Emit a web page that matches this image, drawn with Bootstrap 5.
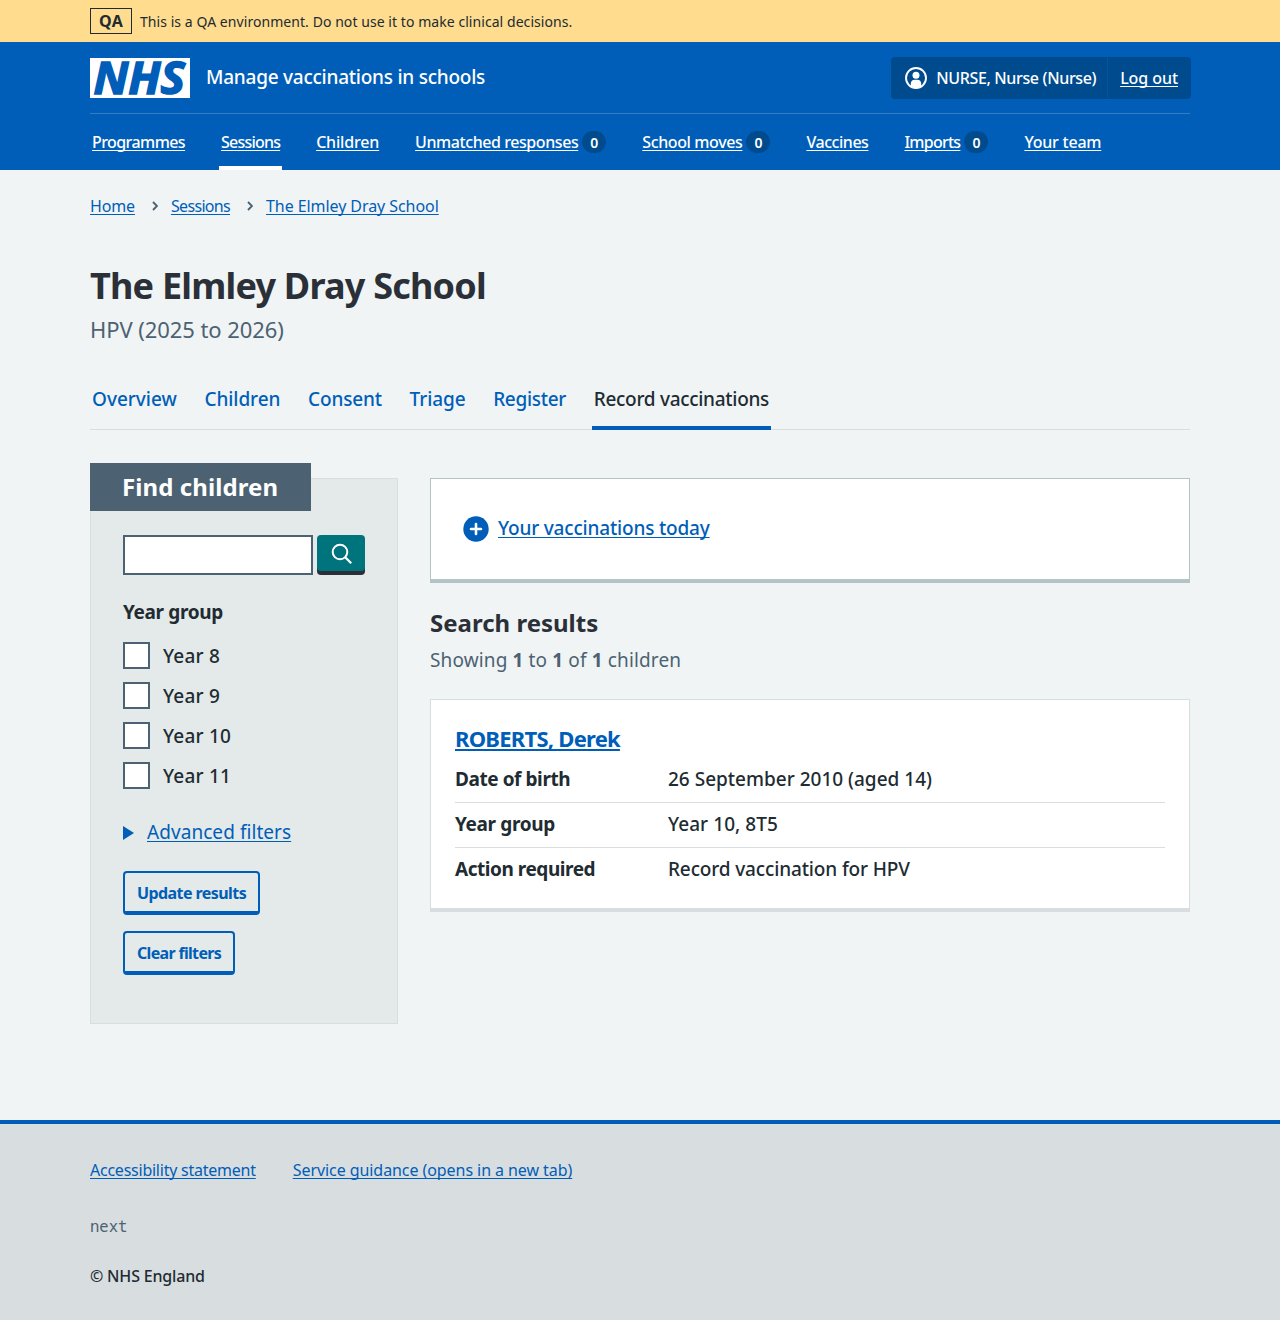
<!DOCTYPE html>
<html lang="en">
<head>
<meta charset="utf-8">
<meta name="viewport" content="width=device-width, initial-scale=1">
<title>Record vaccinations – The Elmley Dray School</title>
<link href="https://cdn.jsdelivr.net/npm/bootstrap@5.3.0/dist/css/bootstrap.min.css" rel="stylesheet">
<style>
:root{--nhs-blue:#005eb8;--nhs-dark:#004b8e;--ink:#212b32;--ink-2:#4c6272;--rule:#d8dde0}
body{font-family:"Noto Sans",sans-serif;font-size:19px;line-height:28px;font-weight:500;color:var(--ink);background:#f0f4f5}
a{color:var(--nhs-blue);text-decoration-thickness:1px;text-underline-offset:2px;text-decoration-skip-ink:none}
b,strong,h1,h2,dt{font-weight:700}
.page-width{width:1100px;margin-left:auto;margin-right:auto}
.fs-16{font-size:16px;line-height:24px}
.muted{color:var(--ink-2)}

/* letter spacing steps */
.k-p2{letter-spacing:.2px}.k-p3{letter-spacing:.08px}.k-p4{letter-spacing:.29px}.k-p1{letter-spacing:.06px}
.k-05{letter-spacing:-.07px}.k-13{letter-spacing:-.14px}.k-18{letter-spacing:-.18px}.k-21{letter-spacing:-.22px}.k-24{letter-spacing:-.24px}
.k-29{letter-spacing:-.29px}.k-35{letter-spacing:-.35px}.k-38{letter-spacing:-.38px}.k-42{letter-spacing:-.43px}.k-46{letter-spacing:-.46px}
.k-55{letter-spacing:-.57px}.k-69{letter-spacing:-.68px}.k-75{letter-spacing:-.75px}.k-81{letter-spacing:-.8px}

/* environment banner */
.env-bar{background:#ffdc8e;height:42px;font-size:14px;font-weight:400}
.env-tag{border:1px solid var(--ink);font-size:16px;line-height:24px;width:42px;font-weight:700;text-align:center}
.env-text{padding-top:2px}

/* header */
.site-header{background:var(--nhs-blue);color:#fff}
.site-header a{color:#fff}
.brand-row{height:72px;border-bottom:1px solid #337ec6}
.brand-row .nhs-logo{overflow:visible}
.service-name{margin:-1px 0 0 16px}
.account{background:var(--nhs-dark);border-radius:4px;height:42px;margin-right:-1px}
.account-user{width:217px;padding-left:14px;border-right:1px solid #0055a4;height:40px}
.account-user svg{margin:1px 9px 0 0}
.account-out{padding:0 13px 0 12px}
.main-nav{height:56px;gap:32px}
.main-nav .nav-item-link{padding:0 2px;height:56px;white-space:nowrap}
.main-nav .is-current{box-shadow:inset 0 -4px #fff}
.count{background:var(--nhs-dark);border-radius:12px;width:24px;height:22px;margin-left:4px;font-size:14px;line-height:23px;text-align:center;font-weight:600}

/* page heading */
.crumbs{padding-top:24px}
.crumbs svg{margin:0 13px 0 17px}
.page-title{font-size:36px;line-height:44px;margin:46px 0 6px;color:#2b3038;letter-spacing:-.78px}
.page-caption{font-size:22px;line-height:30px;font-weight:400}
.tabs-row{margin-top:23px;height:63px;gap:23.6px;box-shadow:inset 0 -1px var(--rule)}
.tabs-row a{padding:1px 2px 0;text-decoration:none;white-space:nowrap}
.tabs-row .is-current{color:var(--ink);box-shadow:inset 0 -4px var(--nhs-blue)}

/* filter panel */
.content-row{margin-top:48px;gap:32px}
.filters{width:308px;height:546px;background:#e4e9e9;border:1px solid var(--rule);padding:0 32px}
.filters-title{background:var(--ink-2);color:#fff;font-size:24px;line-height:48px;height:48px;width:221px;margin:-16px 0 24px -33px;padding-left:32px}
.search-box{width:190px;height:40px;border:2px solid var(--ink-2);border-radius:0;padding:0;background:#fff}
.search-btn{width:48px;height:36px;background:#00747d;border-radius:4px;border:0;padding:2px 0 0 2px;box-shadow:0 4px #2b3038;margin-left:4px}
.year-legend{margin:23px 0 9px;font-size:19px;line-height:28px;font-weight:700}
.year-opt{height:40px}
.year-opt span{padding-left:13px;padding-top:2px}
.tick{width:27px;height:27px;border:2px solid var(--ink-2);border-radius:0;background:#fff;appearance:none;flex:none;margin:0}
.adv{margin-top:23px}
.adv svg{margin:2px 13px 0 0}
.adv-actions{margin-top:25px}
.btn-outline{border:2px solid var(--nhs-blue);border-bottom-width:4px;border-radius:4px;color:var(--nhs-blue);background:transparent;font-size:16px;font-weight:700;height:44px;padding:2px 0 0 12px;line-height:24px;text-align:left;white-space:nowrap}
.btn-update{width:137px}
.btn-clear{width:112px}

/* results */
.results{width:760px}
.panel{background:#fff;border:1px solid var(--rule);border-bottom-width:4px}
.panel-action{border-color:#b3c3c6;height:105px;padding-left:32px}
.your-link{margin:-2px 0 0 9px}
.results-title{font-size:24px;line-height:32px;margin:24px 0 7px;color:#2b3038}
.showing{letter-spacing:.13px}
.panel-child{margin-top:25px;height:213px;padding:23px 24px 0}
.child-link{font-size:22px;line-height:30px;font-weight:700;text-decoration-thickness:2px;vertical-align:top}
.facts{margin:5px 0 0}
.facts>div{height:45px;padding-top:7px;border-bottom:1px solid var(--rule)}
.facts>div:last-child{border:0}
.facts dt{width:213px}
.facts dd{margin:0}

/* footer */
.site-footer{margin-top:96px;border-top:4px solid var(--nhs-blue);background:var(--rule);height:200px;padding-top:34px;font-weight:400}
.site-footer nav{gap:37px}
.release{font-family:"Noto Sans Mono","DejaVu Sans Mono","Liberation Mono",monospace;font-size:15.6px;margin-top:32px}
.copyright{margin-top:26px;font-weight:500}
</style>
</head>
<body>
<div class="env-bar">
  <div class="page-width d-flex align-items-center h-100">
    <span class="env-tag k-p4">QA</span>
    <span class="env-text ms-2 k-p1">This is a QA environment. Do not use it to make clinical decisions.</span>
  </div>
</div>

<header class="site-header">
  <div class="page-width">
    <div class="brand-row d-flex align-items-center">
      <svg class="nhs-logo" width="100" height="40" viewBox="0 0 100 40" role="img" aria-label="NHS">
        <rect width="100" height="40" fill="#fff"/>
        <text x="3.500" y="35.500" font-family="Open Sans, Noto Sans, sans-serif" font-weight="700" font-style="italic" font-size="44" fill="#005eb8" stroke="#005eb8" stroke-width="1.500" textLength="91.500" lengthAdjust="spacingAndGlyphs">NHS</text>
      </svg>
      <span class="service-name k-24">Manage vaccinations in schools</span>
      <div class="account d-flex align-items-center ms-auto fs-16">
        <div class="account-user d-flex align-items-center">
          <svg width="22" height="22" viewBox="0 0 22 22"><circle cx="11" cy="11" r="10" fill="none" stroke="#fff" stroke-width="1.900"/><circle cx="11" cy="8.300" r="3.500" fill="#fff"/><path d="M5.800 19v-2.400a4 4 0 0 1 4-3.800h2.400a4 4 0 0 1 4 3.800V19a10 10 0 0 1-10.400 0z" fill="#fff"/></svg>
          <span class="k-35 text-nowrap">NURSE, Nurse (Nurse)</span>
        </div>
        <a href="#" class="account-out k-05">Log out</a>
      </div>
    </div>
    <nav class="main-nav d-flex fs-16">
      <div class="nav-item-link d-flex align-items-center"><a href="#" class="k-55">Programmes</a></div>
      <div class="nav-item-link d-flex align-items-center is-current"><a href="#" class="k-81">Sessions</a></div>
      <div class="nav-item-link d-flex align-items-center"><a href="#" class="k-18">Children</a></div>
      <div class="nav-item-link d-flex align-items-center"><a href="#" class="k-42">Unmatched responses</a><span class="count">0</span></div>
      <div class="nav-item-link d-flex align-items-center"><a href="#" class="k-38">School moves</a><span class="count">0</span></div>
      <div class="nav-item-link d-flex align-items-center"><a href="#" class="k-46">Vaccines</a></div>
      <div class="nav-item-link d-flex align-items-center"><a href="#" class="k-75">Imports</a><span class="count">0</span></div>
      <div class="nav-item-link d-flex align-items-center"><a href="#" class="k-21">Your team</a></div>
    </nav>
  </div>
</header>

<main class="page-width">
  <nav class="crumbs d-flex align-items-center fs-16 fw-normal">
    <a href="#" class="k-13">Home</a>
    <svg width="6" height="10" viewBox="0 0 6 10"><path d="M1 1l4 4-4 4" fill="none" stroke="#4c6272" stroke-width="1.900"/></svg>
    <a href="#" class="k-69">Sessions</a>
    <svg width="6" height="10" viewBox="0 0 6 10"><path d="M1 1l4 4-4 4" fill="none" stroke="#4c6272" stroke-width="1.900"/></svg>
    <a href="#" class="k-05">The Elmley Dray School</a>
  </nav>

  <h1 class="page-title">The Elmley Dray School</h1>
  <div class="page-caption muted k-05">HPV (2025 to 2026)</div>

  <nav class="tabs-row d-flex">
    <a href="#" class="d-flex align-items-center">Overview</a>
    <a href="#" class="d-flex align-items-center k-05">Children</a>
    <a href="#" class="d-flex align-items-center k-13">Consent</a>
    <a href="#" class="d-flex align-items-center k-05">Triage</a>
    <a href="#" class="d-flex align-items-center k-29">Register</a>
    <a href="#" class="d-flex align-items-center is-current k-29">Record vaccinations</a>
  </nav>

  <div class="content-row d-flex align-items-start">
    <section class="filters">
      <h2 class="filters-title k-p3">Find children</h2>
      <div class="d-flex align-items-start">
        <input type="text" class="search-box" aria-label="Search">
        <button class="search-btn d-flex align-items-center justify-content-center" aria-label="Search">
          <svg width="22" height="22" viewBox="0 0 22 22"><circle cx="9" cy="9" r="7.300" fill="none" stroke="#fff" stroke-width="2"/><path d="M14.200 14.200l6 6" stroke="#fff" stroke-width="2.300"/></svg>
        </button>
      </div>
      <div class="year-legend k-35">Year group</div>
      <label class="year-opt d-flex align-items-center"><input type="checkbox" class="tick"><span class="k-p2">Year 8</span></label>
      <label class="year-opt d-flex align-items-center"><input type="checkbox" class="tick"><span class="k-p2">Year 9</span></label>
      <label class="year-opt d-flex align-items-center"><input type="checkbox" class="tick"><span class="k-p2">Year 10</span></label>
      <label class="year-opt d-flex align-items-center"><input type="checkbox" class="tick"><span class="k-p2">Year 11</span></label>
      <div class="adv d-flex align-items-center">
        <svg width="11" height="14" viewBox="0 0 11 14"><path d="M0 0l11 7-11 7z" fill="#005eb8"/></svg>
        <a href="#" class="fw-normal k-p1">Advanced filters</a>
      </div>
      <div class="adv-actions d-flex flex-column align-items-start gap-3">
        <button class="btn-outline btn-update k-55">Update results</button>
        <button class="btn-outline btn-clear k-69">Clear filters</button>
      </div>
    </section>

    <section class="results">
      <div class="panel panel-action d-flex align-items-center">
        <svg width="26" height="26" viewBox="0 0 26 26"><circle cx="13" cy="13" r="12.700" fill="#005eb8"/><path d="M13 8v10M8 13h10" stroke="#fff" stroke-width="2.600" stroke-linecap="round"/></svg>
        <a href="#" class="k-18 your-link">Your vaccinations today</a>
      </div>
      <h2 class="results-title">Search results</h2>
      <div class="muted fw-normal showing">Showing <b>1</b> to <b>1</b> of <b>1</b> children</div>
      <div class="panel panel-child">
        <a href="#" class="child-link d-inline-block k-75">ROBERTS, Derek</a>
        <dl class="facts">
          <div class="d-flex"><dt class="k-42">Date of birth</dt><dd>26 September 2010 (aged 14)</dd></div>
          <div class="d-flex"><dt class="k-35">Year group</dt><dd class="k-p1">Year 10, 8T5</dd></div>
          <div class="d-flex"><dt class="k-46">Action required</dt><dd class="k-13">Record vaccination for HPV</dd></div>
        </dl>
      </div>
    </section>
  </div>
</main>

<footer class="site-footer fs-16">
  <div class="page-width">
    <nav class="d-flex">
      <a href="#" class="k-24">Accessibility statement</a>
      <a href="#" class="k-05">Service guidance (opens in a new tab)</a>
    </nav>
    <div class="release muted">next</div>
    <div class="copyright k-18">© NHS England</div>
  </div>
</footer>
<script src="https://cdn.jsdelivr.net/npm/bootstrap@5.3.0/dist/js/bootstrap.bundle.min.js"></script>
</body>
</html>
